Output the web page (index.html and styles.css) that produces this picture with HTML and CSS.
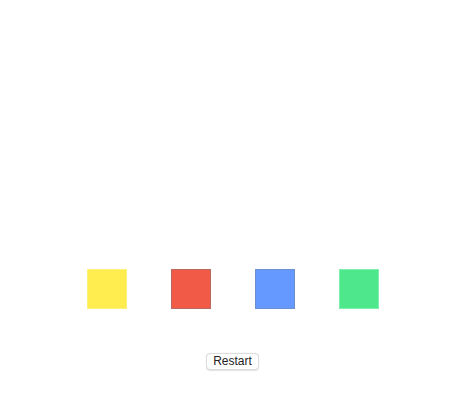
FILE: index.html
```html
<!DOCTYPE html>
<html>
<head>
<meta charset="utf-8">
<link rel="stylesheet" href="styles.css">
</head>
<body>
<div class="stage">
  <div class="squares">
    <div class="sq yellow"></div>
    <div class="sq red"></div>
    <div class="sq blue"></div>
    <div class="sq green"></div>
  </div>
  <button class="restart">Restart</button>
</div>
</body>
</html>
```
FILE: styles.css
```css
html, body {
  margin: 0;
  padding: 0;
  background: #ffffff;
}
.stage {
  width: 464px;
  height: 412px;
  display: flex;
  flex-direction: column;
  align-items: center;
  padding-top: 269px;
  box-sizing: border-box;
}
.squares {
  display: flex;
  gap: 44px;
  margin-left: 2px;
}
.sq {
  width: 40px;
  height: 40px;
  box-sizing: border-box;
  border: 1px solid rgba(0,0,0,0.12);
}
.yellow { background: #ffec4f; border-color: #fff07a; }
.red { background: #f05a47; border-color: #b66a60; }
.blue { background: #6699ff; border-color: #6d8fcf; }
.green { background: #4fe78b; border-color: #7ef0ab; }
.restart {
  margin-top: 44px;
  margin-left: 1px;
  width: 53px;
  height: 17px;
  padding: 0;
  box-sizing: border-box;
  background: #ffffff;
  border: 1px solid #dcdcdc;
  border-radius: 4px;
  box-shadow: 0 0.5px 1px rgba(0,0,0,0.12);
  font-family: "Liberation Sans", Arial, sans-serif;
  font-size: 12px;
  line-height: 15px;
  color: #222222;
}
```
